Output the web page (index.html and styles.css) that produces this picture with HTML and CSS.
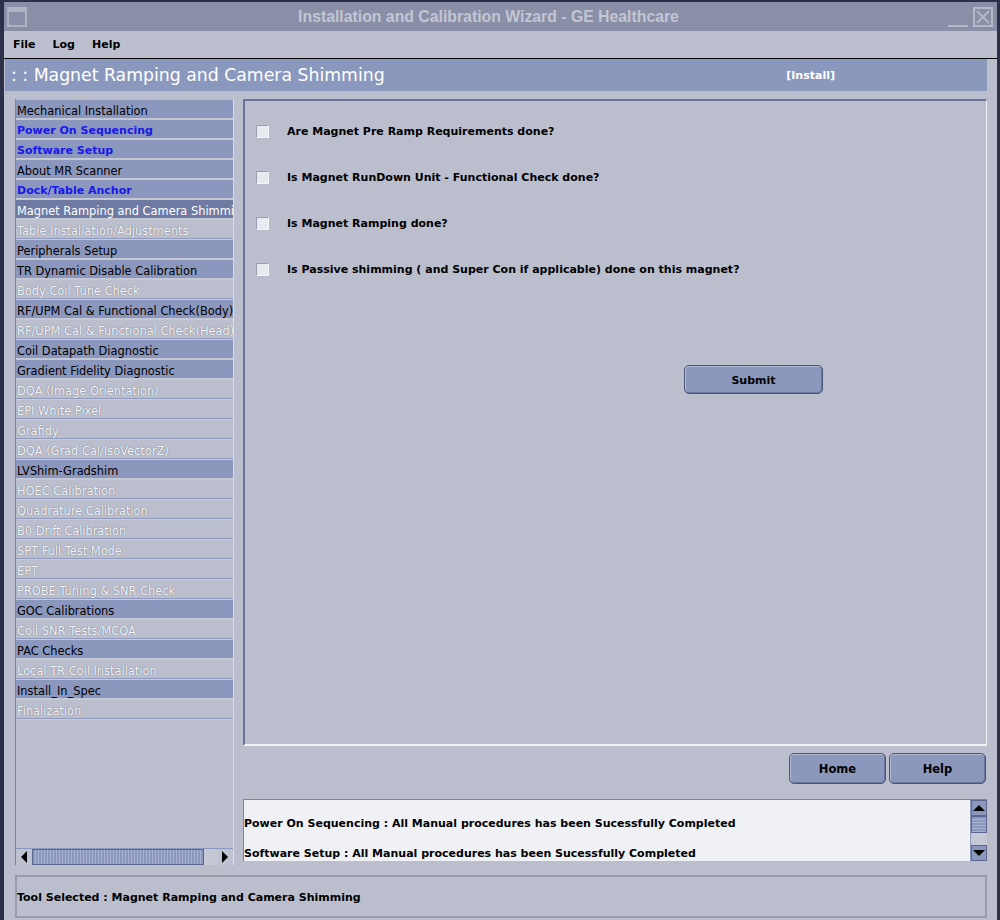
FILE: index.html
```html
<!DOCTYPE html>
<html lang="en">
<head>
    <meta charset="UTF-8">
    <title>Installation and Calibration Wizard - GE Healthcare</title>
    <link rel="stylesheet" href="styles.css">
</head>
<body>
    <div class="window">
        <div class="titlebar">
            <span class="win-icon"></span>
            <span class="title">Installation and Calibration Wizard - GE Healthcare</span>
            <span class="win-controls">
                <span class="minimize"></span>
                <span class="close">
                    <svg width="20" height="20" viewBox="0 0 20 20">
                        <rect x="1" y="1" width="18" height="18" fill="none" stroke="#b4b8c8" stroke-width="2"/>
                        <path d="M4 4 L16 16 M16 4 L4 16" stroke="#b4b8c8" stroke-width="2"/>
                    </svg>
                </span>
            </span>
        </div>

        <div class="menubar">
            <span>File</span>
            <span>Log</span>
            <span>Help</span>
        </div>

        <div class="header">
            <span class="header-title">: : Magnet Ramping and Camera Shimming</span>
            <span class="mode">[Install]</span>
        </div>

        <div class="content">
            <div class="sidebar">
                <ul class="steps">
                    <li class="step">Mechanical Installation</li>
                    <li class="step done">Power On Sequencing</li>
                    <li class="step done">Software Setup</li>
                    <li class="step">About MR Scanner</li>
                    <li class="step done">Dock/Table Anchor</li>
                    <li class="step selected">Magnet Ramping and Camera Shimming</li>
                    <li class="step off">Table Installation/Adjustments</li>
                    <li class="step">Peripherals Setup</li>
                    <li class="step">TR Dynamic Disable Calibration</li>
                    <li class="step off">Body Coil Tune Check</li>
                    <li class="step">RF/UPM Cal &amp; Functional Check(Body)</li>
                    <li class="step off">RF/UPM Cal &amp; Functional Check(Head)</li>
                    <li class="step">Coil Datapath Diagnostic</li>
                    <li class="step">Gradient Fidelity Diagnostic</li>
                    <li class="step off">DQA (Image Orientation)</li>
                    <li class="step off">EPI White Pixel</li>
                    <li class="step off">Grafidy</li>
                    <li class="step off">DQA (Grad Cal/IsoVectorZ)</li>
                    <li class="step">LVShim-Gradshim</li>
                    <li class="step off">HOEC Calibration</li>
                    <li class="step off">Quadrature Calibration</li>
                    <li class="step off">B0 Drift Calibration</li>
                    <li class="step off">SPT Full Test Mode</li>
                    <li class="step off">EPT</li>
                    <li class="step off">PROBE Tuning &amp; SNR Check</li>
                    <li class="step">GOC Calibrations</li>
                    <li class="step off">Coil SNR Tests/MCQA</li>
                    <li class="step">PAC Checks</li>
                    <li class="step off">Local TR Coil Installation</li>
                    <li class="step">Install_In_Spec</li>
                    <li class="step off">Finalization</li>
                </ul>
                <div class="hscroll">
                    <span class="arrow">
                        <svg width="8" height="12" viewBox="0 0 8 12"><path d="M7 0 L1 6 L7 12 Z" fill="#000"/></svg>
                    </span>
                    <span class="thumb-h"></span>
                    <span class="track"></span>
                    <span class="arrow">
                        <svg width="8" height="12" viewBox="0 0 8 12"><path d="M1 0 L7 6 L1 12 Z" fill="#000"/></svg>
                    </span>
                </div>
            </div>

            <div class="main">
                <div class="panel">
                    <div class="check-row"><span class="box"></span><span>Are Magnet Pre Ramp Requirements done?</span></div>
                    <div class="check-row"><span class="box"></span><span>Is Magnet RunDown Unit - Functional Check done?</span></div>
                    <div class="check-row"><span class="box"></span><span>Is Magnet Ramping done?</span></div>
                    <div class="check-row"><span class="box"></span><span>Is Passive shimming ( and Super Con if applicable) done on this magnet?</span></div>
                    <button class="btn submit">Submit</button>
                </div>

                <div class="actions">
                    <button class="btn">Home</button>
                    <button class="btn">Help</button>
                </div>

                <div class="log">
                    <div class="log-text">
                        <p>Power On Sequencing : All Manual procedures has been Sucessfully Completed</p>
                        <p>Software Setup : All Manual procedures has been Sucessfully Completed</p>
                    </div>
                    <div class="vscroll">
                        <span class="arrow">
                            <svg width="12" height="8" viewBox="0 0 12 8"><path d="M0 7 L6 1 L12 7 Z" fill="#000"/></svg>
                        </span>
                        <span class="thumb-v"></span>
                        <span class="track"></span>
                        <span class="arrow">
                            <svg width="12" height="8" viewBox="0 0 12 8"><path d="M0 1 L6 7 L12 1 Z" fill="#000"/></svg>
                        </span>
                    </div>
                </div>
            </div>
        </div>

        <div class="status">Tool Selected : Magnet Ramping and Camera Shimming</div>
    </div>
</body>
</html>
```

FILE: styles.css
```css
* {
    margin: 0;
    padding: 0;
    box-sizing: border-box;
}

body {
    background: #2c3049;
    font-family: 'DejaVu Sans', 'Liberation Sans', sans-serif;
    font-size: 11px;
    color: #000;
    width: 1000px;
    height: 920px;
    overflow: hidden;
}

.window {
    margin: 2px 0 0 4px;
    width: 993px;
    height: 918px;
    background: #bbbecc;
    display: flex;
    flex-direction: column;
}

/* title bar */
.titlebar {
    height: 29px;
    flex-shrink: 0;
    background: #898fa7;
    display: flex;
    align-items: center;
    padding: 0 4px 0 3px;
}

.win-icon {
    width: 20px;
    height: 20px;
    border: 2px solid #aeb2c3;
    border-top-width: 5px;
}

.title {
    flex: 1;
    text-align: center;
    font-family: 'Liberation Sans', Arial, sans-serif;
    font-weight: bold;
    font-size: 15.8px;
    color: #c3c6d4;
    padding-left: 2px;
}

.win-controls {
    display: flex;
    align-items: center;
    gap: 5px;
}

.minimize {
    width: 20px;
    height: 20px;
    border-bottom: 2px solid #b4b8c8;
}

.close {
    display: flex;
}

/* menu */
.menubar {
    height: 28px;
    flex-shrink: 0;
    background: #bcc0ce;
    border-bottom: 1px solid #000;
    display: flex;
    align-items: center;
    gap: 17px;
    padding: 0 0 1px 9px;
    font-weight: bold;
    font-size: 11px;
}

.header {
    height: 32px;
    flex-shrink: 0;
    margin: 0 10px 0 1px;
    background: #8b98bd;
    color: #fff;
    display: flex;
    align-items: center;
    padding-left: 6px;
}

.header-title {
    font-size: 17.3px;
    flex: 1;
}

.mode {
    font-weight: bold;
    font-size: 11px;
    margin-right: 152px;
}

/* content */
.content {
    display: grid;
    grid-template-columns: 219px 1fr;
    gap: 9px;
    padding: 8px 10px 0 11px;
    height: 774px;
    flex-shrink: 0;
}

.sidebar {
    border-left: 1px solid #7b84a8;
    border-right: 1px solid #dadce6;
    padding-top: 1px;
    display: flex;
    flex-direction: column;
    min-height: 0;
}

.steps {
    list-style: none;
    flex: 1;
    overflow: hidden;
}

.step {
    height: 20px;
    line-height: 18px;
    padding: 2px 0 0 1px;
    white-space: nowrap;
    overflow: hidden;
    font-size: 11.4px;
    background: #8b97bd;
    border-bottom: 2px solid #c3c6d3;
}

.step.done {
    color: #1818e8;
    font-weight: bold;
    font-size: 11px;
}

.step.selected {
    background: #6f7aa3;
    color: #fff;
}

.step.off {
    background: #bbbecc;
    color: #f3f4f8;
    text-shadow: 0 0 1px #7e8296, 0 0 1px #7e8296;
    border-bottom: 1px solid #c9ccd8;
    box-shadow: inset 0 -1px 0 #8f9abd;
}

.hscroll {
    height: 17px;
    flex-shrink: 0;
    display: flex;
    background: #c6c9d5;
    border-top: 1px solid #8b97bd;
}

.hscroll .arrow {
    width: 16px;
    display: flex;
    align-items: center;
    justify-content: center;
    background: #bfc3d1;
}

.thumb-h {
    width: 172px;
    background: repeating-linear-gradient(90deg, #8b97bd 0 2px, #a9b2d0 2px 3px);
    border: 1px solid #5d6691;
}

.track {
    flex: 1;
}

/* main column */
.main {
    display: flex;
    flex-direction: column;
}

.panel {
    height: 647px;
    flex-shrink: 0;
    border-top: 2px solid #6d7396;
    border-left: 2px solid #6d7396;
    border-right: 1px solid #f2f3f7;
    border-bottom: 2px solid #f2f3f7;
    padding: 7px 0 0 11px;
}

.check-row {
    height: 46px;
    display: flex;
    align-items: center;
    font-weight: bold;
    font-size: 11px;
}

.box {
    width: 13px;
    height: 13px;
    background: #e9eaf0;
    border: 1px solid #9a9eb0;
    border-right-color: #f4f5f8;
    border-bottom-color: #f4f5f8;
    margin-right: 18px;
}

.btn {
    width: 97px;
    height: 31px;
    padding-top: 1px;
    background: #8b97bd;
    border: 1px solid #4c5478;
    border-radius: 5px;
    box-shadow: inset 1px 1px 0 #b3bbd6, inset -1px -1px 0 #6c769c;
    font-family: 'DejaVu Sans', sans-serif;
    font-weight: bold;
    font-size: 11.5px;
    color: #000;
}

.submit {
    width: 139px;
    height: 29px;
    margin: 73px 0 0 428px;
    font-size: 11px;
}

.actions {
    display: flex;
    justify-content: flex-end;
    gap: 3px;
    margin: 7px 1px 0 0;
}

.log {
    height: 62px;
    margin-top: 15px;
    display: flex;
    background: #f0f1f5;
    border-top: 1px solid #80849a;
    border-left: 1px solid #80849a;
}

.log-text {
    flex: 1;
    font-weight: bold;
    font-size: 11px;
    padding-top: 16px;
}

.log-text p {
    height: 30px;
    line-height: 16px;
}

.vscroll {
    width: 17px;
    display: flex;
    flex-direction: column;
    background: #c6c9d5;
    border-left: 1px solid #8b97bd;
}

.vscroll .arrow {
    height: 16px;
    display: flex;
    align-items: center;
    justify-content: center;
    background: #8b97bd;
    border: 1px solid #5d6691;
}

.thumb-v {
    height: 17px;
    background: repeating-linear-gradient(180deg, #8b97bd 0 2px, #a9b2d0 2px 3px);
    border: 1px solid #5d6691;
}

.status {
    height: 43px;
    flex-shrink: 0;
    margin: 10px 10px 0 11px;
    border: 2px solid #999ca8;
    display: flex;
    align-items: center;
    padding-top: 1px;
    font-weight: bold;
    font-size: 11px;
}
```
